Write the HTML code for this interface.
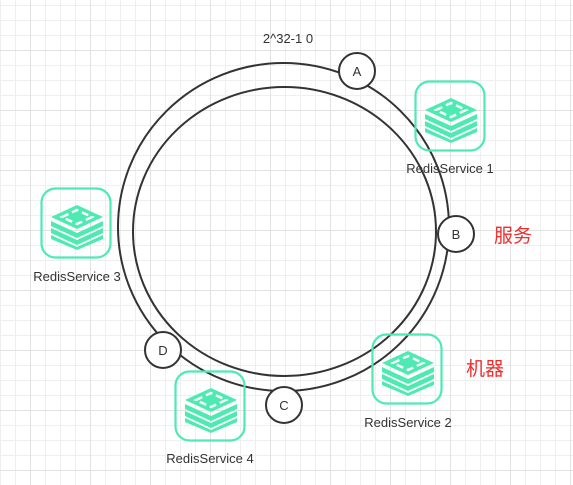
<!DOCTYPE html>
<html><head><style>
html,body{margin:0;padding:0}
body{width:573px;height:485px;overflow:hidden;background:#fff;position:relative;font-family:"Liberation Sans","Noto Sans CJK SC",sans-serif;
background-image:
linear-gradient(to right,#e2e2e2 1px,transparent 1px),
linear-gradient(to bottom,#e2e2e2 1px,transparent 1px),
linear-gradient(to right,#efefef 1px,transparent 1px),
linear-gradient(to bottom,#efefef 1px,transparent 1px);
background-size:60px 60px,60px 60px,15px 15px,15px 15px;
background-position:30px 0,0 50px,0 0,0 5px;}
svg{position:absolute;left:0;top:0}
</style></head><body>
<svg width="573" height="485" viewBox="0 0 573 485">
<defs>
<g id="ic">
<rect x="1.5" y="1.5" width="69" height="69" rx="14" fill="none" stroke="#4eeab2" stroke-width="2.2"/>
<g fill="#4eeab2">
<polygon points="11,30 37,18 63,30 37,42"/>
<polygon points="11,34 37,46 63,34 63,39 37,51 11,39"/>
<polygon points="11,41 37,53 63,41 63,46 37,58 11,46"/>
<polygon points="11,48 37,60 63,48 63,52 37,63 11,52"/>
</g>
<polygon points="22,30 37,23 52,30 37,37" fill="none" stroke="#fff" stroke-width="2.4" stroke-dasharray="7 4"/>
</g>
</defs>
<g fill="none" stroke="#333" stroke-width="2">
<ellipse cx="283.5" cy="227" rx="165.5" ry="164"/>
<ellipse cx="284.5" cy="231.5" rx="151.5" ry="144.5"/>
</g>
<g fill="#fff" stroke="#333" stroke-width="2">
<circle cx="357" cy="71" r="18"/>
<circle cx="456" cy="234" r="18"/>
<circle cx="284" cy="405" r="18"/>
<circle cx="163" cy="350" r="18"/>
</g>
<g font-size="13" fill="#333" text-anchor="middle" font-family="Liberation Sans,sans-serif">
<text x="357" y="76">A</text><text x="456" y="239">B</text><text x="284" y="410">C</text><text x="163" y="355">D</text>
<text x="288" y="43">2^32-1 0</text>
<text x="450" y="173">RedisService 1</text>
<text x="77" y="281">RedisService 3</text>
<text x="408" y="427">RedisService 2</text>
<text x="210" y="463">RedisService 4</text>
</g>
<g font-size="19" fill="#f02d2d" font-family="Noto Sans CJK SC,sans-serif">
<text x="494" y="242">服务</text><text x="466" y="375">机器</text>
</g>
<use href="#ic" x="414" y="80"/>
<use href="#ic" x="40" y="187"/>
<use href="#ic" x="371" y="333"/>
<use href="#ic" x="174" y="370"/>
</svg>
</body></html>
